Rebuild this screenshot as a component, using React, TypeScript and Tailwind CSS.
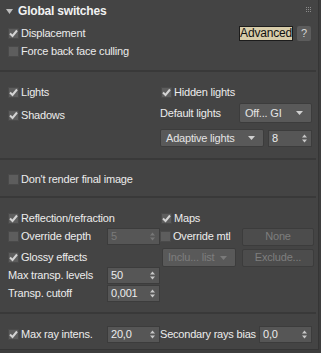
import React from 'react';

const font = { fontFamily: '"Liberation Sans", Arial, sans-serif' };

function Check({ checked, disabled }: { checked?: boolean; disabled?: boolean }) {
  return (
    <div className="flex h-[11px] w-[11px] shrink-0 items-center justify-center border border-[#4a4a4a] bg-[#5d5d5d]">
      {checked && (
        <svg width="9" height="9" viewBox="0 0 9 9">
          <path d="M1 4.5 L3.5 7 L8 1.5" stroke={disabled ? '#888' : '#d4d4d4'} strokeWidth="2" fill="none" />
        </svg>
      )}
    </div>
  );
}

function CheckRow({ label, checked, disabled }: { label: string; checked?: boolean; disabled?: boolean }) {
  return (
    <div className="flex items-center gap-[2px]">
      <Check checked={checked} disabled={disabled} />
      <span className={disabled ? 'text-[#7a7a7a]' : 'text-[#ececec]'}>{label}</span>
    </div>
  );
}

function Spinner({ value, w, disabled }: { value: string; w: string; disabled?: boolean }) {
  return (
    <div className={`flex h-[17px] ${w} items-center justify-between border border-[#3c3c3c] bg-[#565656] pl-[3px] pr-[4px]`}>
      <span className={disabled ? 'text-[#7a7a7a]' : 'text-[#ececec]'}>{value}</span>
      <svg width="5" height="9" viewBox="0 0 5 9">
        <path d="M0 3.5 L2.5 0.5 L5 3.5 Z M0 5.5 L2.5 8.5 L5 5.5 Z" fill={disabled ? '#777' : '#c8c8c8'} />
      </svg>
    </div>
  );
}

function Dropdown({ value, w, h, disabled }: { value: string; w: string; h: string; disabled?: boolean }) {
  return (
    <div className={`flex ${h} ${w} items-center justify-between rounded-[2px] border border-[#3c3c3c] bg-[#595959] pl-[5px] pr-[8px]`}>
      <span className={disabled ? 'text-[#7e7e7e]' : 'text-[#e4e4e4]'}>{value}</span>
      <svg width="7" height="4" viewBox="0 0 7 4">
        <path d="M0 0 L7 0 L3.5 4 Z" fill={disabled ? '#7a7a7a' : '#d0d0d0'} />
      </svg>
    </div>
  );
}

function Button({ label }: { label: string }) {
  return (
    <div className="flex h-[18px] w-[72px] items-center justify-center rounded-[2px] border border-[#3c3c3c] bg-[#4c4c4c] text-[#7e7e7e]">
      {label}
    </div>
  );
}

function Sep() {
  return <div className="h-[2px] w-[316px] shrink-0 bg-[#393939]" />;
}

export default function App() {
  return (
    <div className="h-[353px] w-[321px] bg-[#3d3d3d] text-[11px] leading-none tracking-[-0.2px]" style={font}>
      <div className="flex h-[350px] w-[319px] flex-col border-b border-r border-[#353535] bg-[#444444]">
        {/* header */}
        <div className="flex h-[22px] shrink-0 items-center justify-between pl-[6px] pr-[7px]">
          <div className="flex items-center gap-[5px]">
            <svg width="7" height="5" viewBox="0 0 7 5">
              <path d="M0 0 L7 0 L3.5 5 Z" fill="#bdbdbd" />
            </svg>
            <span className="text-[12px] font-bold text-[#f2f2f2]">Global switches</span>
          </div>
          <div className="grid grid-cols-3 gap-[1px] self-start pt-[7px]">
            {Array.from({ length: 9 }).map((_, i) => (
              <div key={i} className="h-[1px] w-[1px] bg-[#8a8a8a]" />
            ))}
          </div>
        </div>

        <div className="flex h-[20px] shrink-0 items-center justify-between pl-[8px] pr-[7px] pt-[2px]">
          <CheckRow label="Displacement" checked />
          <div className="flex items-center gap-[4px]">
            <div className="flex h-[15px] w-[54px] items-center justify-center border border-[#1c1c1c] bg-[#d8cdaa] text-[12px] text-[#111]">
              Advanced
            </div>
            <div className="flex h-[15px] w-[14px] items-center justify-center rounded-[2px] bg-[#5c5c5c] text-[#d8d8d8]">?</div>
          </div>
        </div>
        <div className="flex h-[19px] shrink-0 items-center pl-[8px]">
          <CheckRow label="Force back face culling" />
        </div>

        <div className="h-[9px] shrink-0" />
        <Sep />

        {/* lights */}
        <div className="flex h-[86px] shrink-0 pl-[8px] pt-[14px]">
          <div className="flex w-[152px] flex-col gap-[11px]">
            <div className="flex h-[12px] items-center">
              <CheckRow label="Lights" checked />
            </div>
            <div className="flex h-[12px] items-center">
              <CheckRow label="Shadows" checked />
            </div>
          </div>
          <div className="flex flex-col">
            <div className="flex h-[12px] items-center pl-[1px]">
              <CheckRow label="Hidden lights" checked />
            </div>
            <div className="mt-[5px] flex items-center justify-between">
              <span className="text-[#ececec]">Default lights</span>
              <Dropdown value="Off... GI" w="w-[73px]" h="h-[20px]" />
            </div>
            <div className="mt-[6px] flex items-center gap-[4px]">
              <Dropdown value="Adaptive lights" w="w-[104px]" h="h-[18px]" />
              <Spinner value="8" w="w-[44px]" />
            </div>
          </div>
        </div>
        <Sep />

        <div className="flex h-[36px] shrink-0 items-center pl-[8px] pt-[2px]">
          <CheckRow label="Don't render final image" />
        </div>
        <Sep />

        {/* reflection */}
        <div className="flex h-[114px] shrink-0 pl-[8px] pt-[14px]">
          <div className="flex w-[152px] flex-col">
            <div className="flex h-[12px] items-center">
              <CheckRow label="Reflection/refraction" checked />
            </div>
            <div className="mt-[4px] flex h-[17px] items-center justify-between">
              <CheckRow label="Override depth" />
              <Spinner value="5" w="w-[53px]" disabled />
            </div>
            <div className="mt-[3px] flex h-[19px] items-center">
              <CheckRow label="Glossy effects" checked />
            </div>
            <div className="flex h-[17px] items-center justify-between">
              <span className="text-[#ececec]">Max transp. levels</span>
              <Spinner value="50" w="w-[53px]" />
            </div>
            <div className="mt-[1px] flex h-[17px] items-center justify-between">
              <span className="text-[#ececec]">Transp. cutoff</span>
              <Spinner value="0,001" w="w-[53px]" />
            </div>
          </div>
          <div className="flex flex-col">
            <div className="flex h-[12px] items-center pl-[1px]">
              <CheckRow label="Maps" checked />
            </div>
            <div className="mt-[4px] flex h-[17px] w-[154px] items-center justify-between">
              <CheckRow label="Override mtl" />
              <Button label="None" />
            </div>
            <div className="mt-[3px] flex h-[19px] w-[154px] items-center justify-between pl-[2px]">
              <Dropdown value="Inclu... list" w="w-[74px]" h="h-[19px]" disabled />
              <Button label="Exclude..." />
            </div>
          </div>
        </div>
        <Sep />

        <div className="flex h-[35px] shrink-0 items-center pl-[8px] pt-[5px]">
          <div className="flex w-[152px] items-center justify-between">
            <CheckRow label="Max ray intens." checked />
            <Spinner value="20,0" w="w-[53px]" />
          </div>
          <div className="flex w-[152px] items-center justify-between">
            <span className="text-[#ececec]">Secondary rays bias</span>
            <Spinner value="0,0" w="w-[53px]" />
          </div>
        </div>
      </div>
    </div>
  );
}
